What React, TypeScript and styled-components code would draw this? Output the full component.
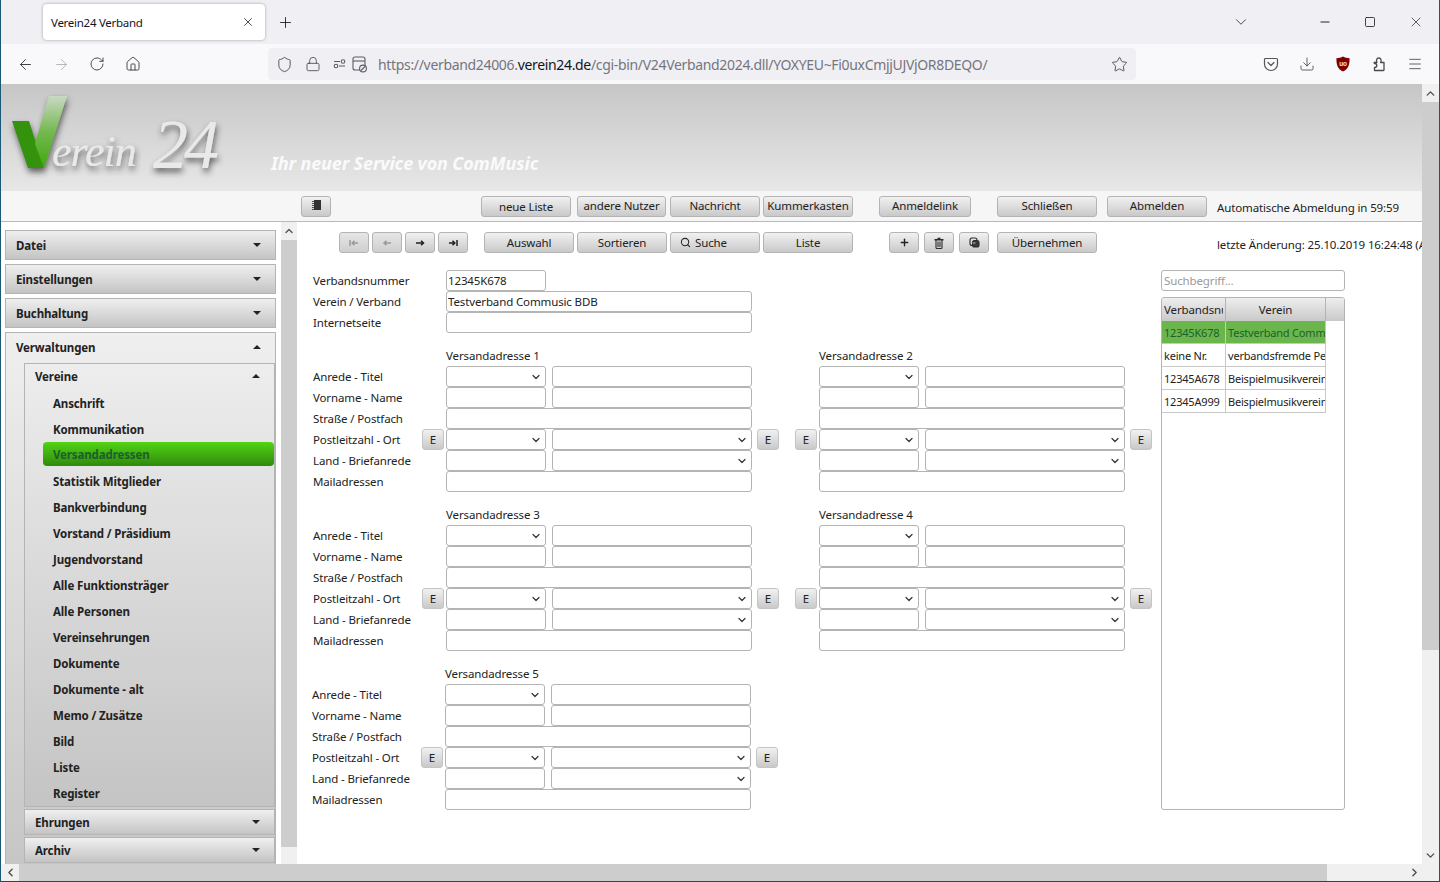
import styled, { createGlobalStyle } from "styled-components";
import {
  ArrowLeft,
  ArrowRight,
  ChevronDown,
  ChevronLeft,
  ChevronRight,
  ChevronUp,
  Download,
  Home,
  Lock,
  Menu,
  Minus,
  Plus,
  RotateCw,
  Search,
  Shield,
  Square,
  Star,
  X,
} from "lucide-react";

const UI_FONT = `"Noto Sans", "Open Sans", sans-serif`;

const GlobalStyle = createGlobalStyle`
  * { box-sizing: border-box; }
  html, body { margin: 0; padding: 0; overflow: hidden; }
  body { font-family: ${UI_FONT}; font-size: 11.5px; letter-spacing: -0.13px; color: #222; }
`;

const SUB_ITEMS = [
  "Anschrift",
  "Kommunikation",
  "Versandadressen",
  "Statistik Mitglieder",
  "Bankverbindung",
  "Vorstand / Präsidium",
  "Jugendvorstand",
  "Alle Funktionsträger",
  "Alle Personen",
  "Vereinsehrungen",
  "Dokumente",
  "Dokumente - alt",
  "Memo / Zusätze",
  "Bild",
  "Liste",
  "Register",
];

const LIST_ROWS = [
  ["12345K678", "Testverband Commusic BDB"],
  ["keine Nr.", "verbandsfremde Personen"],
  ["12345A678", "Beispielmusikverein 1"],
  ["12345A999", "Beispielmusikverein 2"],
];

const Logo = () => (
  <LogoSvg viewBox="0 0 270 107" width="270" height="107">
    <defs>
      <linearGradient id="vRight" x1="0" y1="0" x2="0" y2="1">
        <stop offset="0" stopColor="#c9d9c2" />
        <stop offset="0.5" stopColor="#74b84e" />
        <stop offset="1" stopColor="#3fa90e" />
      </linearGradient>
      <filter id="logoShadow" x="-20%" y="-20%" width="150%" height="150%">
        <feDropShadow dx="1" dy="4" stdDeviation="3" floodColor="#333" floodOpacity="0.75" />
      </filter>
    </defs>
    <g filter="url(#logoShadow)">
      <polygon points="11,37 28,37 43,84 27,84" fill="#36920f" />
      <polygon points="48,12 66,12 43,84 34,60" fill="url(#vRight)" />
    </g>
    <g filter="url(#logoShadow)" fill="#e9e9e9" fontFamily="Liberation Serif, serif" fontStyle="italic">
      <text x="51" y="82" fontSize="44" letterSpacing="-1">erein</text>
      <text x="152" y="84" fontSize="70" letterSpacing="-4">24</text>
    </g>
  </LogoSvg>
);

const PocketIcon = () => (
  <svg width="16" height="16" viewBox="0 0 16 16" fill="none" stroke="#55555c" strokeWidth="1.2">
    <path d="M2.500 2.500h11a1 1 0 0 1 1 1V8a6.500 6.500 0 0 1-13 0V3.500a1 1 0 0 1 1-1z" />
    <path d="M5 6.500l3 3 3-3" strokeLinecap="round" strokeLinejoin="round" />
  </svg>
);

const UblockIcon = () => (
  <svg width="16" height="16" viewBox="0 0 16 16">
    <path d="M8 .6c2 1.200 4 1.700 6.600 1.700 0 6-.9 10.600-6.600 13.200C2.300 12.900 1.400 8.300 1.400 2.300 4 2.300 6 1.800 8 .6z" fill="#800000" />
    <text x="8" y="10" fontSize="6.500" fontWeight="700" fill="#f4e4e4" textAnchor="middle" fontFamily="Liberation Sans, sans-serif">uo</text>
  </svg>
);

const ExtensionIcon = () => (
  <svg width="16" height="16" viewBox="0 0 16 16" fill="none" stroke="#4a4a52" strokeWidth="1.300" strokeLinejoin="round">
    <path d="M3 6.500H6C5 5 5.300 2 7.800 2S10.600 5 9.600 6.500H13V14a.5.5 0 0 1-.5.5H3.500V11.500C5 11.500 5.800 10.700 5.800 9.500S5 7.500 3.500 7.500z" />
  </svg>
);

const PermissionIcon = () => (
  <svg width="34" height="18" viewBox="0 0 34 18" fill="none" stroke="#5b5b66" strokeWidth="1.100">
    <circle cx="3" cy="11" r="1.800" />
    <path d="M6 11h6M1 6.500h6" />
    <circle cx="10" cy="6.500" r="1.800" />
    <rect x="20" y="2" width="12" height="13" rx="2" />
    <path d="M20 6h12" />
    <circle cx="30" cy="13.500" r="3.400" fill="#f0f0f4" />
    <path d="M28 15.500l4-4" />
  </svg>
);

const ToolIcon = ({ kind }: { kind: string }) => {
  const paths: Record<string, string> = {
    first: "M1 2v6M9 5H3.500M5.500 2.800L3.200 5l2.300 2.200",
    prev: "M9 5H2M4.500 2.800L2 5l2.500 2.200",
    next: "M1 5h7.500M6 2.800L8.500 5 6 7.200",
    last: "M9 2v6M1 5h5.500M4.500 2.800L6.800 5 4.500 7.200",
  };
  return (
    <svg width="10" height="10" viewBox="0 0 10 10" fill="none" stroke="currentColor" strokeWidth="1.500">
      <path d={paths[kind]} />
    </svg>
  );
};

const TrashIcon = () => (
  <svg width="10" height="12" viewBox="0 0 10 12" fill="none" stroke="#2a2a2a" strokeWidth="1.100">
    <path d="M3.500 1.500h3M.5 2.800h9" strokeWidth="1.400" />
    <path d="M2 3v7.500a1 1 0 0 0 1 1h4a1 1 0 0 0 1-1V3" />
    <path d="M4 4.500v5.500M6 4.500v5.500" />
  </svg>
);

const CopyIcon = () => (
  <svg width="11" height="11" viewBox="0 0 11 11" fill="none" stroke="#2a2a2a" strokeWidth="1.100">
    <path d="M3 8.500a2 2 0 0 1-2-2V3a2 2 0 0 1 2-2h3a2 2 0 0 1 2 2" />
    <rect x="3.500" y="3.500" width="6.500" height="6.500" rx="2" fill="#3a3a3a" />
    <path d="M3.500 6h3" stroke="#e0e0e0" strokeWidth="0.800" />
  </svg>
);

const ListToggleIcon = () => (
  <svg width="9" height="10" viewBox="0 0 9 10">
    <rect x="2" y="0" width="7" height="10" fill="#333" />
    <path d="M0 1.500h2M0 3.500h2M0 5.500h2M0 7.500h2M0 9.500h2" stroke="#555" strokeWidth="1" />
  </svg>
);

const Caret = ({ up }: { up?: boolean }) => (
  <svg width="8" height="4" viewBox="0 0 8 4">
    <polygon points={up ? "4,0 8,4 0,4" : "0,0 8,0 4,4"} fill="#222" />
  </svg>
);

const AddressGrid = ({
  index,
  labels,
  nudge,
  trailing,
}: {
  index: number;
  labels: boolean;
  nudge?: boolean;
  trailing: boolean;
}) => {
  const rows: [string, "plain" | "zip" | "select" | "wide" | "land"][] = [
    ["Anrede - Titel", "select"],
    ["Vorname - Name", "plain"],
    ["Straße / Postfach", "wide"],
    ["Postleitzahl - Ort", "zip"],
    ["Land - Briefanrede", "land"],
    ["Mailadressen", "wide"],
  ];
  return (
    <Block $nudge={nudge}>
      <BlockTitle $labels={labels}>Versandadresse {index}</BlockTitle>
      {rows.map(([label, kind]) => (
        <FieldRow key={label}>
          {labels && <FieldLabel>{label}</FieldLabel>}
          <ESlot>{kind === "zip" && <EButton>E</EButton>}</ESlot>
          {kind === "wide" ? (
            <TextInput $w={306} readOnly />
          ) : (
            <>
              {kind === "select" || kind === "zip" ? (
                <SelectBox $w={100}>
                  <ChevronDown size={12} strokeWidth={2.4} />
                </SelectBox>
              ) : (
                <TextInput $w={100} readOnly />
              )}
              {kind === "zip" || kind === "land" ? (
                <SelectBox $w={200} $ml={6}>
                  <ChevronDown size={12} strokeWidth={2.4} />
                </SelectBox>
              ) : (
                <TextInput $w={200} $ml={6} readOnly />
              )}
            </>
          )}
          {kind === "zip" && trailing && <EButton $ml={5}>E</EButton>}
        </FieldRow>
      ))}
    </Block>
  );
};

const App = () => (
  <>
    <GlobalStyle />
    <Window>
      <TabStrip>
        <Tab>
          <TabTitle>Verein24 Verband</TabTitle>
          <X size={14} strokeWidth={1.3} />
        </Tab>
        <NewTab>
          <Plus size={17} strokeWidth={1.2} />
        </NewTab>
        <WindowControls>
          <ChevronDown size={18} strokeWidth={1} />
          <WinButton $ml={68}>
            <Minus size={14} strokeWidth={1.6} />
          </WinButton>
          <WinButton $ml={32}>
            <Square size={12} strokeWidth={1.6} />
          </WinButton>
          <WinButton $ml={32}>
            <X size={16} strokeWidth={1} />
          </WinButton>
        </WindowControls>
      </TabStrip>

      <NavBar>
        <NavIcon>
          <ArrowLeft size={17} strokeWidth={1.4} />
        </NavIcon>
        <NavIcon $muted>
          <ArrowRight size={17} strokeWidth={1.4} />
        </NavIcon>
        <NavIcon>
          <RotateCw size={16} strokeWidth={1.4} />
        </NavIcon>
        <NavIcon>
          <Home size={16} strokeWidth={1.4} />
        </NavIcon>
        <UrlBar>
          <Shield size={17} strokeWidth={1.3} />
          <Lock size={16} strokeWidth={1.3} />
          <PermissionIcon />
          <UrlText>
            https://verband24006.<b>verein24.de</b>/cgi-bin/V24Verband2024.dll/YOXYEU~Fi0uxCmjjUJVjOR8DEQO/
          </UrlText>
          <Star size={17} strokeWidth={1.3} />
        </UrlBar>
        <ExtIcons>
          <PocketIcon />
          <Download size={16} strokeWidth={1.3} />
          <UblockIcon />
          <ExtensionIcon />
          <Menu size={16} strokeWidth={1.3} />
        </ExtIcons>
      </NavBar>

      <PageRow>
        <PageColumn>
          <Banner>
            <Logo />
            <Tagline>Ihr neuer Service von ComMusic</Tagline>
          </Banner>

          <TopBar>
            <SoftButton $w={30} $ml={300}>
              <ListToggleIcon />
            </SoftButton>
            <SoftButton $w={90} $ml={150} $low>
              neue Liste
            </SoftButton>
            <SoftButton $w={89} $ml={6}>
              andere Nutzer
            </SoftButton>
            <SoftButton $w={90} $ml={4}>
              Nachricht
            </SoftButton>
            <SoftButton $w={90} $ml={3}>
              Kummerkasten
            </SoftButton>
            <SoftButton $w={92} $ml={26}>
              Anmeldelink
            </SoftButton>
            <SoftButton $w={100} $ml={26}>
              Schließen
            </SoftButton>
            <SoftButton $w={100} $ml={10}>
              Abmelden
            </SoftButton>
            <StatusText $ml={10}>Automatische Abmeldung in 59:59</StatusText>
          </TopBar>

          <Body>
            <Sidebar>
              <AccordionHead>
                Datei
                <Caret />
              </AccordionHead>
              <AccordionHead>
                Einstellungen
                <Caret />
              </AccordionHead>
              <AccordionHead>
                Buchhaltung
                <Caret />
              </AccordionHead>
              <OpenPanel>
                <OpenHead>
                  Verwaltungen
                  <Caret up />
                </OpenHead>
                <SubPanel>
                  <SubHead>
                    Vereine
                    <Caret up />
                  </SubHead>
                  {SUB_ITEMS.map((item) => (
                    <SubItem key={item} $active={item === "Versandadressen"}>
                      {item}
                    </SubItem>
                  ))}
                </SubPanel>
                <SubAccordion>
                  Ehrungen
                  <Caret />
                </SubAccordion>
                <SubAccordion>
                  Archiv
                  <Caret />
                </SubAccordion>
              </OpenPanel>
            </Sidebar>

            <SideScroll>
              <ScrollArrow $h={18}>
                <ChevronUp size={12} strokeWidth={2.6} />
              </ScrollArrow>
              <ScrollThumb $h={607} />
            </SideScroll>

            <Main>
              <ActionBar>
                <SoftButton $w={30} $ml={42} $disabled>
                  <ToolIcon kind="first" />
                </SoftButton>
                <SoftButton $w={30} $ml={3} $disabled>
                  <ToolIcon kind="prev" />
                </SoftButton>
                <SoftButton $w={30} $ml={3}>
                  <ToolIcon kind="next" />
                </SoftButton>
                <SoftButton $w={30} $ml={3}>
                  <ToolIcon kind="last" />
                </SoftButton>
                <SoftButton $w={90} $ml={16}>
                  Auswahl
                </SoftButton>
                <SoftButton $w={90} $ml={3}>
                  Sortieren
                </SoftButton>
                <SoftButton $w={90} $ml={3} $start>
                  <Search size={11} strokeWidth={2.2} />
                  Suche
                </SoftButton>
                <SoftButton $w={90} $ml={3}>
                  Liste
                </SoftButton>
                <SoftButton $w={30} $ml={36}>
                  <Plus size={11} strokeWidth={3} />
                </SoftButton>
                <SoftButton $w={30} $ml={5}>
                  <TrashIcon />
                </SoftButton>
                <SoftButton $w={30} $ml={5}>
                  <CopyIcon />
                </SoftButton>
                <SoftButton $w={100} $ml={8}>
                  Übernehmen
                </SoftButton>
                <ChangeText $ml={120}>letzte Änderung: 25.10.2019 16:24:48 (Admin)</ChangeText>
              </ActionBar>

              <Workspace>
                <FormColumn>
                  <FieldRow>
                    <HeadLabel>Verbandsnummer</HeadLabel>
                    <TextInput $w={100} defaultValue="12345K678" readOnly />
                  </FieldRow>
                  <FieldRow>
                    <HeadLabel>Verein / Verband</HeadLabel>
                    <TextInput $w={306} defaultValue="Testverband Commusic BDB" readOnly />
                  </FieldRow>
                  <FieldRow>
                    <HeadLabel>Internetseite</HeadLabel>
                    <TextInput $w={306} readOnly />
                  </FieldRow>
                  <BlockRow>
                    <AddressGrid index={1} labels trailing />
                    <AddressGrid index={2} labels={false} trailing />
                  </BlockRow>
                  <BlockRow>
                    <AddressGrid index={3} labels trailing />
                    <AddressGrid index={4} labels={false} trailing />
                  </BlockRow>
                  <BlockRow>
                    <AddressGrid index={5} labels nudge trailing />
                  </BlockRow>
                </FormColumn>

                <ListColumn>
                  <SearchInput placeholder="Suchbegriff..." readOnly />
                  <ListBox>
                    <ListHead>
                      <HeadCell $w={64}>
                        <ClipText>Verbandsnummer</ClipText>
                      </HeadCell>
                      <HeadCell $w={100} $center>
                        Verein
                      </HeadCell>
                      <HeadFiller />
                    </ListHead>
                    {LIST_ROWS.map(([nr, name], i) => (
                      <ListRow key={nr} $selected={i === 0}>
                        <ListCell $w={64} $selected={i === 0}>
                          {nr}
                        </ListCell>
                        <ListCell $w={100} $selected={i === 0}>
                          {name}
                        </ListCell>
                      </ListRow>
                    ))}
                  </ListBox>
                </ListColumn>
              </Workspace>
            </Main>
          </Body>
        </PageColumn>

        <VScroll>
          <ScrollArrow $h={18}>
            <ChevronUp size={13} strokeWidth={2.6} />
          </ScrollArrow>
          <ScrollThumb $h={548} />
          <VScrollEnd>
            <ChevronDown size={13} strokeWidth={2.6} />
          </VScrollEnd>
        </VScroll>
      </PageRow>

      <HScroll>
        <HArrow>
          <ChevronLeft size={13} strokeWidth={2.6} />
        </HArrow>
        <HThumb />
        <HEnd>
          <ChevronRight size={13} strokeWidth={2.6} />
        </HEnd>
      </HScroll>
    </Window>
  </>
);

export default App;

const Window = styled.div`
  width: 1440px;
  height: 882px;
  display: flex;
  flex-direction: column;
  overflow: hidden;
  border-left: 1px solid #1a5878;
  border-right: 1px solid #1a5878;
  border-bottom: 1px solid #1a4a68;
  background: #fff;
`;

const TabStrip = styled.div`
  height: 44px;
  flex: none;
  display: flex;
  align-items: center;
  background: #f0f0f4;
  padding-left: 42px;
  color: #15141a;
`;

const Tab = styled.div`
  width: 222px;
  height: 36px;
  display: flex;
  align-items: center;
  justify-content: space-between;
  padding: 0 10px 0 8px;
  background: #fff;
  border-radius: 4px;
  box-shadow: 0 0 3px rgba(0, 0, 0, 0.35);
`;

const TabTitle = styled.span`
  font-size: 11.5px;
  letter-spacing: -0.27px;
  color: #15141a;
`;

const NewTab = styled.div`
  margin-left: 12px;
  display: flex;
`;

const WindowControls = styled.div`
  margin-left: auto;
  padding-right: 15px;
  display: flex;
  align-items: center;
`;

const WinButton = styled.div<{ $ml: number }>`
  margin-left: ${({ $ml }) => $ml}px;
  display: flex;
`;

const NavBar = styled.div`
  height: 40px;
  flex: none;
  display: flex;
  align-items: center;
  background: #f9f9fb;
  padding-left: 15px;
  color: #4a4a52;
`;

const NavIcon = styled.div<{ $muted?: boolean }>`
  width: 18px;
  margin-right: 18px;
  display: flex;
  justify-content: center;
  color: ${({ $muted }) => ($muted ? "#b5b5ba" : "#3f3f46")};
`;

const UrlBar = styled.div`
  width: 868px;
  height: 32px;
  margin-left: 108px;
  padding: 0 8px;
  display: flex;
  align-items: center;
  gap: 12px;
  background: #f0f0f4;
  border-radius: 4px;
  color: #4a4a52;
`;

const UrlText = styled.div`
  flex: 1;
  margin-left: -1px;
  font-size: 14px;
  letter-spacing: -0.33px;
  color: #75757d;
  white-space: nowrap;
  overflow: hidden;

  b {
    font-weight: 400;
    color: #15141a;
  }
`;

const ExtIcons = styled.div`
  margin-left: 127px;
  display: flex;
  align-items: center;
  gap: 20px;
  color: #4a4a52;
`;

const PageRow = styled.div`
  flex: 1;
  min-height: 0;
  display: flex;
`;

const PageColumn = styled.div`
  flex: 1;
  min-width: 0;
  display: flex;
  flex-direction: column;
`;

const Banner = styled.div`
  height: 107px;
  flex: none;
  display: flex;
  background: linear-gradient(#c6c6c6, #e7e7e7);
`;

const LogoSvg = styled.svg`
  flex: none;
`;

const Tagline = styled.div`
  align-self: flex-end;
  padding-bottom: 16px;
  font-size: 18px;
  letter-spacing: -0.15px;
  font-weight: 700;
  font-style: italic;
  color: #fafafa;
  white-space: nowrap;
`;

const SoftButton = styled.div<{
  $w: number;
  $ml?: number;
  $disabled?: boolean;
  $low?: boolean;
  $start?: boolean;
}>`
  width: ${({ $w }) => $w}px;
  height: 21px;
  flex: none;
  margin-left: ${({ $ml }) => $ml ?? 0}px;
  padding-top: ${({ $low }) => ($low ? "3px" : "0")};
  padding-left: ${({ $start }) => ($start ? "9px" : "0")};
  display: flex;
  align-items: center;
  justify-content: ${({ $start }) => ($start ? "flex-start" : "center")};
  gap: 4px;
  color: ${({ $disabled }) => ($disabled ? "#9a9a9a" : "#222")};
  border: 1px solid #b4b4b4;
  border-radius: 3px;
  background: ${({ $disabled }) =>
    $disabled
      ? "linear-gradient(#e6e6e6, #cfcfcf)"
      : "linear-gradient(#f1f1f1, #c9c9c9)"};
`;

const TopBar = styled.div`
  height: 31px;
  flex: none;
  display: flex;
  align-items: center;
  background: #f6f6f6;
  border-bottom: 1px solid #b9b9b9;

  ${SoftButton} {
    padding-bottom: 2px;
  }
`;

const StatusText = styled.div<{ $ml: number }>`
  margin-left: ${({ $ml }) => $ml}px;
  padding-top: 2px;
  white-space: nowrap;
`;

const ChangeText = styled(StatusText)`
  padding-top: 4px;
`;

const Body = styled.div`
  flex: 1;
  min-height: 0;
  display: flex;
`;

const Sidebar = styled.div`
  width: 280px;
  flex: none;
  padding: 8px 5px 0 4px;
  display: flex;
  flex-direction: column;
  gap: 4px;
  overflow: hidden;
`;

const AccordionHead = styled.div`
  height: 30px;
  flex: none;
  padding: 0 14px 0 10px;
  display: flex;
  align-items: center;
  justify-content: space-between;
  font-weight: 700;
  border: 1px solid #b4b4b4;
  background: linear-gradient(#efefef, #c4c4c4);
`;

const OpenPanel = styled.div`
  flex: 1;
  min-height: 900px;
  border: 1px solid #b4b4b4;
  border-bottom: none;
  background: linear-gradient(#efefef 0, #c6c6c6 530px);
  padding-left: 18px;
`;

const OpenHead = styled.div`
  height: 30px;
  margin-left: -8px;
  padding: 0 14px 2px 0;
  display: flex;
  align-items: center;
  justify-content: space-between;
  font-weight: 700;
`;

const SubPanel = styled.div`
  border: 1px solid #b4b4b4;
  background: linear-gradient(#ededed, #c4c4c4);
`;

const SubHead = styled.div`
  height: 26px;
  padding: 0 14px 2px 10px;
  display: flex;
  align-items: center;
  justify-content: space-between;
  font-weight: 700;
`;

const SubItem = styled.div<{ $active?: boolean }>`
  height: ${({ $active }) => ($active ? "24px" : "26px")};
  margin: ${({ $active }) => ($active ? "0 0 2px 18px" : "0 0 0 18px")};
  padding: ${({ $active }) => ($active ? "1px 0 0 10px" : "0 0 0 10px")};
  display: flex;
  align-items: center;
  font-weight: 700;
  color: ${({ $active }) => ($active ? "#1c5f2c" : "#222")};
  border-radius: 4px;
  background: ${({ $active }) =>
    $active ? "linear-gradient(#52d414, #2f8a0c)" : "transparent"};
`;

const SubAccordion = styled(AccordionHead)`
  height: 26px;
  margin-top: 2px;
`;

const SideScroll = styled.div`
  width: 16px;
  flex: none;
  display: flex;
  flex-direction: column;
  background: #f0f0f0;
`;

const ScrollArrow = styled.div<{ $h: number }>`
  height: ${({ $h }) => $h}px;
  flex: none;
  display: flex;
  align-items: center;
  justify-content: center;
  color: #505050;
`;

const ScrollThumb = styled.div<{ $h: number }>`
  height: ${({ $h }) => $h}px;
  flex: none;
  background: #cdcdcd;
`;

const Main = styled.div`
  flex: 1;
  min-width: 0;
  overflow: hidden;
  padding-top: 10px;
`;

const ActionBar = styled.div`
  display: flex;
  align-items: center;
`;

const Workspace = styled.div`
  display: flex;
  margin-top: 17px;
  padding-left: 16px;
`;

const FormColumn = styled.div`
  width: 839px;
  flex: none;
`;

const FieldRow = styled.div`
  height: 21px;
  display: flex;
  align-items: center;
`;

const HeadLabel = styled.div`
  width: 133px;
  flex: none;
`;

const FieldLabel = styled.div`
  width: 109px;
  flex: none;
  white-space: nowrap;
`;

const ESlot = styled.div`
  width: 24px;
  flex: none;
`;

const EButton = styled.div<{ $ml?: number }>`
  width: 22px;
  height: 21px;
  flex: none;
  margin-left: ${({ $ml }) => $ml ?? 0}px;
  padding-bottom: 1px;
  display: flex;
  align-items: center;
  justify-content: center;
  border: 1px solid #c4c4c4;
  border-radius: 3px;
  background: linear-gradient(#f1f1f1, #c9c9c9);
`;

const TextInput = styled.input<{ $w: number; $ml?: number }>`
  width: ${({ $w }) => $w}px;
  height: 21px;
  flex: none;
  margin: 0 0 0 ${({ $ml }) => $ml ?? 0}px;
  padding: 0 1px;
  font-family: ${UI_FONT};
  font-size: 11.5px;
  letter-spacing: -0.13px;
  color: #222;
  outline: none;
  background: #fff;
  border: 1px solid #b4b4b4;
  border-radius: 3px;
`;

const SelectBox = styled.div<{ $w: number; $ml?: number }>`
  width: ${({ $w }) => $w}px;
  height: 21px;
  flex: none;
  margin-left: ${({ $ml }) => $ml ?? 0}px;
  padding-right: 3px;
  display: flex;
  align-items: center;
  justify-content: flex-end;
  color: #333;
  background: #fff;
  border: 1px solid #b4b4b4;
  border-radius: 3px;
`;

const BlockRow = styled.div`
  display: flex;
  gap: 16px;
  margin-top: 13px;
`;

const Block = styled.div<{ $nudge?: boolean }>`
  margin-left: ${({ $nudge }) => ($nudge ? "-1px" : "0")};
`;

const BlockTitle = styled.div<{ $labels: boolean }>`
  height: 20px;
  display: flex;
  align-items: center;
  padding-bottom: 2px;
  padding-left: ${({ $labels }) => ($labels ? "133px" : "24px")};
`;

const ListColumn = styled.div`
  width: 184px;
  flex: none;
  margin-left: 9px;
  display: flex;
  flex-direction: column;
  gap: 6px;
`;

const SearchInput = styled.input`
  width: 184px;
  height: 21px;
  margin: 0;
  padding: 0 2px;
  font-family: ${UI_FONT};
  font-size: 11.5px;
  letter-spacing: -0.13px;
  outline: none;
  border: 1px solid #b4b4b4;
  border-radius: 3px;

  &::placeholder {
    color: #9a9a9a;
  }
`;

const ListBox = styled.div`
  height: 513px;
  border: 1px solid #b4b4b4;
  border-radius: 3px;
  overflow: hidden;
`;

const ListHead = styled.div`
  height: 23px;
  display: flex;
  background: linear-gradient(#eeeeee, #c9c9c9);
`;

const HeadCell = styled.div<{ $w: number; $center?: boolean }>`
  width: ${({ $w }) => $w}px;
  flex: none;
  padding: 0 2px;
  display: flex;
  align-items: center;
  justify-content: ${({ $center }) => ($center ? "center" : "flex-start")};
  overflow: hidden;
  border-right: 1px solid #b4b4b4;
`;

const ClipText = styled.span`
  white-space: nowrap;
  overflow: hidden;
`;

const HeadFiller = styled.div`
  flex: 1;
`;

const ListRow = styled.div<{ $selected?: boolean }>`
  width: 164px;
  height: 23px;
  display: flex;
  border-bottom: 1px solid #c8c8c8;
  background: ${({ $selected }) => ($selected ? "#6ab64c" : "#fff")};
`;

const ListCell = styled.div<{ $w: number; $selected?: boolean }>`
  width: ${({ $w }) => $w}px;
  flex: none;
  padding: 0 2px;
  display: flex;
  align-items: center;
  font-size: 11px;
  letter-spacing: -0.2px;
  white-space: nowrap;
  overflow: hidden;
  color: ${({ $selected }) => ($selected ? "#1c5f2c" : "#222")};
  border-right: 1px solid #c8c8c8;
`;

const VScroll = styled.div`
  width: 17px;
  flex: none;
  display: flex;
  flex-direction: column;
  background: #f0f0f0;
`;

const VScrollEnd = styled.div`
  flex: 1;
  display: flex;
  align-items: flex-end;
  justify-content: center;
  padding-bottom: 2px;
  color: #505050;
`;

const HScroll = styled.div`
  height: 17px;
  flex: none;
  display: flex;
  background: #f0f0f0;
  color: #505050;
`;

const HArrow = styled.div`
  width: 18px;
  flex: none;
  display: flex;
  align-items: center;
  justify-content: center;
`;

const HThumb = styled.div`
  width: 1308px;
  flex: none;
  background: #cdcdcd;
`;

const HEnd = styled.div`
  flex: 1;
  padding-right: 18px;
  display: flex;
  align-items: center;
  justify-content: flex-end;
`;
